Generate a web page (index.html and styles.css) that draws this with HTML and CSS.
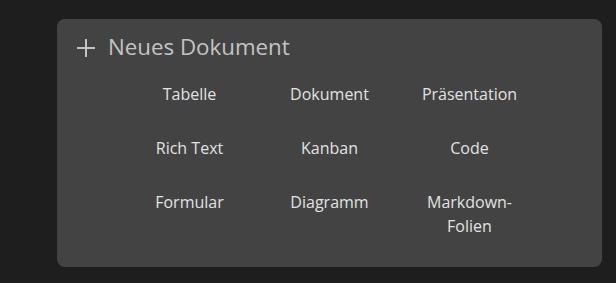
FILE: index.html
```html
<!DOCTYPE html>
<html>
<head>
	<meta charset="UTF-8">
	<link rel="stylesheet" href="styles.css">
</head>
<body>
<div class="newDocPanel">
	<div class="panelTitle">
		<svg class="plusIcon" width="18" height="18" viewBox="0 0 18 18"><path d="M9 0V18M0 9H18" stroke="#c4c4c4" stroke-width="2"/></svg>
		<span>Neues Dokument</span>
	</div>
	<div class="docTypes">
		<b>Tabelle</b>
		<b>Dokument</b>
		<b>Präsentation</b>
		<b>Rich Text</b>
		<b>Kanban</b>
		<b>Code</b>
		<b>Formular</b>
		<b>Diagramm</b>
		<b>Markdown-<br>Folien</b>
	</div>
</div>
</body>
</html>
```

FILE: styles.css
```css
html, body
{
	margin: 0;
	padding: 0;
	height: 100%;
	background-color: #1e1e1e;
	font-family: "Open Sans", "Liberation Sans", sans-serif;
}
body
{
	padding: 19px 0 0 57px;
	box-sizing: border-box;
}

.newDocPanel
{
	width: 545px;
	height: 248px;
	box-sizing: border-box;
	padding: 13px 20px 14px 20px;
	background-color: #434343;
	border-radius: 8px;
}

.panelTitle
{
	display: flex;
	align-items: center;
	gap: 13px;
	height: 30px;
	line-height: 30px;
	font-size: 22.3px;
	color: #c4c4c4;
	margin-bottom: 5px;
}
.plusIcon
{
	display: block;
	margin-top: 2px;
}

.docTypes
{
	display: grid;
	grid-template-columns: repeat(3, 140px);
	justify-content: center;
}
.docTypes b
{
	font-weight: normal;
	font-size: 16px;
	line-height: 24px;
	color: #e2e2e2;
	text-align: center;
	padding: 15px 10px;
	cursor: pointer;
}
```
